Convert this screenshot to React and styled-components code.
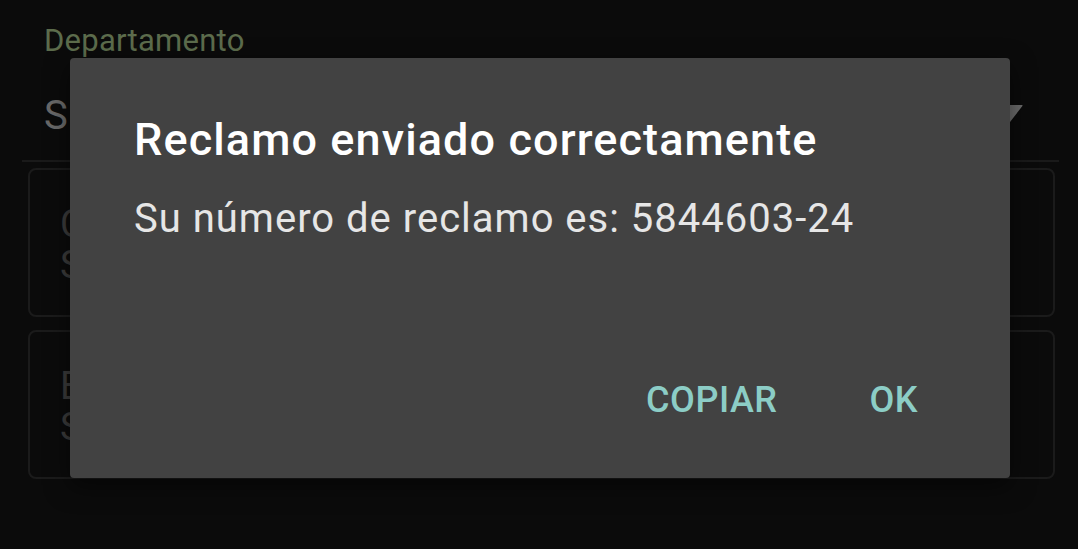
import React from 'react';
import styled, { createGlobalStyle } from 'styled-components';

const GlobalStyle = createGlobalStyle`
  html, body {
    margin: 0;
    padding: 0;
    background: #0b0b0b;
    font-family: Roboto, 'Noto Sans', 'Liberation Sans', sans-serif;
  }
  * {
    box-sizing: border-box;
  }
`;

const Screen = styled.div`
  position: relative;
  width: 1078px;
  height: 549px;
  overflow: hidden;
  background: #0b0b0b;
`;

const Form = styled.div`
  padding: 23px 19px 0 22px;
`;

const FieldLabel = styled.div`
  padding-left: 22px;
  font-size: 31px;
  line-height: 36px;
  letter-spacing: 0.25px;
  color: #5c6c4c;
`;

const Select = styled.div`
  display: flex;
  align-items: center;
  justify-content: space-between;
  margin-top: 29px;
  padding: 0 36px 0 22px;
  height: 74px;
  border-bottom: 2px solid #1a1a1a;
`;

const SelectValue = styled.div`
  font-size: 40px;
  line-height: 48px;
  color: #686868;
  margin-top: -16px;
`;

const Arrow = styled.svg`
  width: 38px;
  height: 25px;
  margin-top: -14px;
`;

const CardList = styled.div`
  display: flex;
  flex-direction: column;
  gap: 13px;
  padding: 6px 4px 0 6px;
`;

const Card = styled.div`
  border: 2px solid #1b1b1b;
  border-radius: 8px;
  height: 149px;
  padding: 34px 30px 0;
`;

const CardLine = styled.div`
  font-size: 38px;
  line-height: 41px;
  color: #3a3a3a;
  white-space: nowrap;
`;

const Overlay = styled.div`
  position: absolute;
  inset: 0;
  display: flex;
  justify-content: flex-start;
  align-items: flex-start;
  padding: 58px 0 0 70px;
`;

const Dialog = styled.div`
  width: 940px;
  height: 420px;
  background: #424242;
  border-radius: 4px;
  box-shadow: 0 8px 24px rgba(0, 0, 0, 0.5);
  display: flex;
  flex-direction: column;
  padding: 56px 0 0 64px;
`;

const Title = styled.h2`
  margin: 0;
  font-size: 45px;
  line-height: 52px;
  font-weight: 500;
  letter-spacing: 1.1px;
  color: #ffffff;
  white-space: nowrap;
`;

const Message = styled.p`
  margin: 31px 0 0;
  font-size: 40px;
  line-height: 44px;
  font-weight: 400;
  letter-spacing: 1px;
  color: #e6e6e6;
  white-space: nowrap;
`;

const Actions = styled.div`
  margin-top: auto;
  display: flex;
  justify-content: flex-end;
  gap: 32px;
  padding: 0 62px 42px 0;
`;

const ActionButton = styled.button`
  height: 72px;
  padding: 0 30px;
  border: none;
  background: transparent;
  font-family: inherit;
  font-size: 36px;
  line-height: 72px;
  font-weight: 500;
  letter-spacing: 0.5px;
  color: #8ccdc6;
  text-transform: uppercase;
  cursor: pointer;
`;

const cards = [
  ['C', 'S'],
  ['E', 'S'],
];

export default function App() {
  return (
    <>
      <GlobalStyle />
      <Screen>
        <Form>
          <FieldLabel>Departamento</FieldLabel>
          <Select>
            <SelectValue>S</SelectValue>
            <Arrow viewBox="0 0 38 25">
              <path d="M1 0 H37 Q38 0 37.4 1 L19.6 24 Q19 25 18.4 24 L0.6 1 Q0 0 1 0 Z" fill="#6b6b6b" />
            </Arrow>
          </Select>
          <CardList>
            {cards.map((lines, i) => (
              <Card key={i}>
                {lines.map((l, j) => (
                  <CardLine key={j}>{l}</CardLine>
                ))}
              </Card>
            ))}
          </CardList>
        </Form>
        <Overlay>
          <Dialog role="dialog">
            <Title>Reclamo enviado correctamente</Title>
            <Message>Su número de reclamo es: 5844603-24</Message>
            <Actions>
              <ActionButton>Copiar</ActionButton>
              <ActionButton>OK</ActionButton>
            </Actions>
          </Dialog>
        </Overlay>
      </Screen>
    </>
  );
}
